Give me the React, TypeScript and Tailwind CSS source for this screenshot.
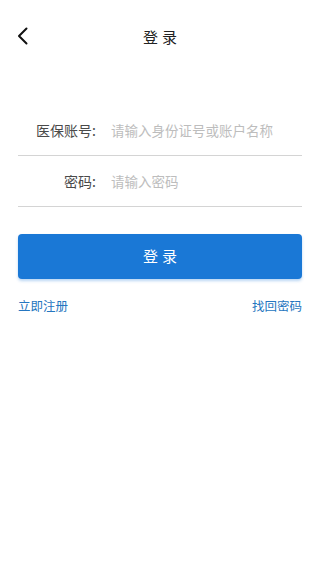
export default function App() {
  return (
    <div
      className="w-[320px] h-[569px] bg-white"
      style={{ fontFamily: '"Noto Sans CJK SC", "Noto Sans", sans-serif' }}
    >
      <div className="relative h-[74px] flex items-center justify-center">
        <button className="absolute left-[16px] top-[27px] text-[#111]">
          <svg width="14" height="18" viewBox="0 0 14 18" fill="none">
            <path d="M10.5 1.5 3 9l7.5 7.5" stroke="currentColor" strokeWidth="2" strokeLinecap="round" strokeLinejoin="round" />
          </svg>
        </button>
        <h1 className="text-[15px] tracking-[4px] text-[#222] pl-[4px]">登录</h1>
      </div>

      <div className="px-[18px] mt-[31px]">
        <div className="flex items-center h-[51px] border-b border-[#d4d4d4]">
          <label className="w-[78px] text-right text-[14px] text-[#4a4a4a]">医保账号:</label>
          <input
            className="ml-[15px] flex-1 min-w-0 text-[13.5px] outline-none placeholder:text-[#bdbdbd]"
            placeholder="请输入身份证号或账户名称"
          />
        </div>
        <div className="flex items-center h-[51px] border-b border-[#d4d4d4]">
          <label className="w-[78px] text-right text-[14px] text-[#4a4a4a]">密码:</label>
          <input
            type="password"
            className="ml-[15px] flex-1 min-w-0 text-[13.5px] outline-none placeholder:text-[#bdbdbd]"
            placeholder="请输入密码"
          />
        </div>

        <button className="mt-[27px] w-full h-[45px] rounded-[4px] bg-[#1a78d6] text-white text-[15px] tracking-[4px] pl-[4px] shadow-[0_2px_3px_rgba(26,120,214,0.3)]">
          登录
        </button>

        <div className="flex justify-between mt-[18px] text-[12.5px] text-[#2576c0]">
          <span>立即注册</span>
          <span>找回密码</span>
        </div>
      </div>
    </div>
  );
}
